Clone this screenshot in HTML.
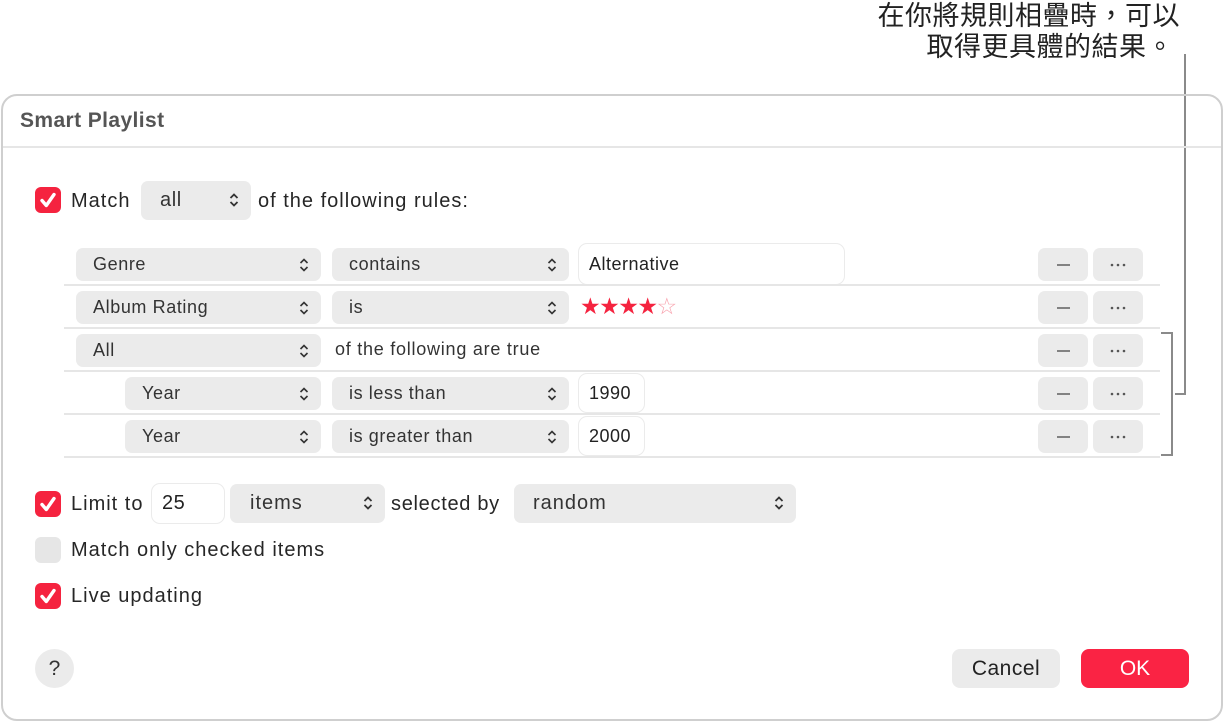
<!DOCTYPE html>
<html><head><meta charset="utf-8"><style>
*{box-sizing:border-box;margin:0;padding:0}
body{width:1226px;height:726px;background:#fff;position:relative;overflow:hidden;font-family:"Liberation Sans","Noto Sans CJK TC",sans-serif;color:#262626}
.a{position:absolute}
.dlg{left:1px;top:94px;width:1222px;height:627px;border:2px solid #cfcfcf;border-radius:16px}
.pop{position:absolute;background:#ebebeb;border-radius:7px;height:33px;font-size:18px;line-height:33px;padding-left:17px;color:#333;letter-spacing:0.6px}
.pop svg{position:absolute;right:12px;top:9px}
.fld{position:absolute;background:#fff;border:1.5px solid #ebebeb;border-radius:9px;font-size:18px;color:#222;padding-left:10px;letter-spacing:0.5px}
.sep{position:absolute;left:64px;width:1096px;height:2px;background:#e6e6e6}
.btn{position:absolute;background:#ebebeb;border-radius:7px;width:50px;height:33px}
.cb{position:absolute;width:26px;height:26px;border-radius:6px;background:#f5233f}
.cb svg{position:absolute;left:3px;top:3px}
.t{position:absolute;font-size:20px;line-height:24px;color:#262626;letter-spacing:1px}
</style></head><body>
<div class="a" style="left:800px;top:1px;width:380px;text-align:right;font-size:27px;line-height:31px;color:#222;letter-spacing:0.5px">在你將規則相疊時，可以<br><span style="margin-right:6px">取得更具體的結果。</span></div>
<div class="a" style="left:1184px;top:54px;width:2px;height:341px;background:#8a8a8a"></div>
<div class="a" style="left:1175px;top:393px;width:11px;height:2px;background:#8a8a8a"></div>
<div class="a" style="left:1171px;top:332px;width:2px;height:124px;background:#8a8a8a"></div>
<div class="a" style="left:1161px;top:332px;width:12px;height:2px;background:#8a8a8a"></div>
<div class="a" style="left:1161px;top:454px;width:12px;height:2px;background:#8a8a8a"></div>

<div class="a dlg"></div>
<div class="a" style="left:3px;top:146px;width:1218px;height:2px;background:#e6e6e6"></div>
<div class="a" style="left:20px;top:109px;font-size:21px;font-weight:bold;color:#555;letter-spacing:0.4px">Smart Playlist</div>

<div class="cb" style="left:35px;top:187px"><svg width="20" height="20" viewBox="0 0 20 20"><path d="M4 10.5 L8.3 15.5 L16 4.5" stroke="#fff" stroke-width="3.4" fill="none" stroke-linecap="round" stroke-linejoin="round"/></svg></div>
<div class="t" style="left:71px;top:189px">Match</div>
<div class="pop" style="left:141px;top:181px;width:110px;height:39px;line-height:39px;font-size:20px;padding-left:19px">all<svg width="10" height="16" viewBox="0 0 10 16" style="top:11px"><path d="M1.5 6 L5 2.5 L8.5 6 M1.5 10 L5 13.5 L8.5 10" stroke="#333" stroke-width="1.8" fill="none"/></svg></div>
<div class="t" style="left:258px;top:189px">of the following rules:</div>

<div class="pop" style="left:76px;top:248px;width:245px">Genre<svg width="10" height="16" viewBox="0 0 10 16"><path d="M1.5 6 L5 2.5 L8.5 6 M1.5 10 L5 13.5 L8.5 10" stroke="#333" stroke-width="1.6" fill="none"/></svg></div>
<div class="pop" style="left:332px;top:248px;width:237px">contains<svg width="10" height="16" viewBox="0 0 10 16"><path d="M1.5 6 L5 2.5 L8.5 6 M1.5 10 L5 13.5 L8.5 10" stroke="#333" stroke-width="1.6" fill="none"/></svg></div>
<div class="fld" style="left:578px;top:243px;width:267px;height:42px;line-height:40px">Alternative</div>
<div class="sep" style="top:284px"></div>

<div class="pop" style="left:76px;top:291px;width:245px">Album Rating<svg width="10" height="16" viewBox="0 0 10 16"><path d="M1.5 6 L5 2.5 L8.5 6 M1.5 10 L5 13.5 L8.5 10" stroke="#333" stroke-width="1.6" fill="none"/></svg></div>
<div class="pop" style="left:332px;top:291px;width:237px">is<svg width="10" height="16" viewBox="0 0 10 16"><path d="M1.5 6 L5 2.5 L8.5 6 M1.5 10 L5 13.5 L8.5 10" stroke="#333" stroke-width="1.6" fill="none"/></svg></div>
<div class="a" style="left:580px;top:294px;font-size:23px;line-height:26px;color:#f5233f;font-family:'DejaVu Sans',sans-serif;letter-spacing:-1.5px">★★★★<span style="color:#f8a0ac">☆</span></div>
<div class="sep" style="top:327px"></div>

<div class="pop" style="left:76px;top:334px;width:245px">All<svg width="10" height="16" viewBox="0 0 10 16"><path d="M1.5 6 L5 2.5 L8.5 6 M1.5 10 L5 13.5 L8.5 10" stroke="#333" stroke-width="1.6" fill="none"/></svg></div>
<div class="a" style="left:335px;top:338px;font-size:18px;line-height:22px;color:#333;letter-spacing:0.75px">of the following are true</div>
<div class="sep" style="top:370px"></div>

<div class="pop" style="left:125px;top:377px;width:196px">Year<svg width="10" height="16" viewBox="0 0 10 16"><path d="M1.5 6 L5 2.5 L8.5 6 M1.5 10 L5 13.5 L8.5 10" stroke="#333" stroke-width="1.6" fill="none"/></svg></div>
<div class="pop" style="left:332px;top:377px;width:237px">is less than<svg width="10" height="16" viewBox="0 0 10 16"><path d="M1.5 6 L5 2.5 L8.5 6 M1.5 10 L5 13.5 L8.5 10" stroke="#333" stroke-width="1.6" fill="none"/></svg></div>
<div class="fld" style="left:578px;top:373px;width:67px;height:40px;line-height:38px">1990</div>
<div class="sep" style="top:413px"></div>

<div class="pop" style="left:125px;top:420px;width:196px">Year<svg width="10" height="16" viewBox="0 0 10 16"><path d="M1.5 6 L5 2.5 L8.5 6 M1.5 10 L5 13.5 L8.5 10" stroke="#333" stroke-width="1.6" fill="none"/></svg></div>
<div class="pop" style="left:332px;top:420px;width:237px">is greater than<svg width="10" height="16" viewBox="0 0 10 16"><path d="M1.5 6 L5 2.5 L8.5 6 M1.5 10 L5 13.5 L8.5 10" stroke="#333" stroke-width="1.6" fill="none"/></svg></div>
<div class="fld" style="left:578px;top:416px;width:67px;height:40px;line-height:38px">2000</div>
<div class="sep" style="top:456px"></div>

<div class="btn" style="left:1038px;top:248px"></div><div class="btn" style="left:1093px;top:248px"></div>
<div class="btn" style="left:1038px;top:291px"></div><div class="btn" style="left:1093px;top:291px"></div>
<div class="btn" style="left:1038px;top:334px"></div><div class="btn" style="left:1093px;top:334px"></div>
<div class="btn" style="left:1038px;top:377px"></div><div class="btn" style="left:1093px;top:377px"></div>
<div class="btn" style="left:1038px;top:420px"></div><div class="btn" style="left:1093px;top:420px"></div>
<svg class="a" style="left:0;top:0" width="1226" height="726">
<g stroke="#555" stroke-width="1.4">
<line x1="1057" y1="265" x2="1070" y2="265"/><line x1="1057" y1="308" x2="1070" y2="308"/><line x1="1057" y1="351" x2="1070" y2="351"/><line x1="1057" y1="394" x2="1070" y2="394"/><line x1="1057" y1="437" x2="1070" y2="437"/>
</g>
<g fill="#555">
<circle cx="1112" cy="265" r="1.3"/><circle cx="1118" cy="265" r="1.3"/><circle cx="1124" cy="265" r="1.3"/>
<circle cx="1112" cy="308" r="1.3"/><circle cx="1118" cy="308" r="1.3"/><circle cx="1124" cy="308" r="1.3"/>
<circle cx="1112" cy="351" r="1.3"/><circle cx="1118" cy="351" r="1.3"/><circle cx="1124" cy="351" r="1.3"/>
<circle cx="1112" cy="394" r="1.3"/><circle cx="1118" cy="394" r="1.3"/><circle cx="1124" cy="394" r="1.3"/>
<circle cx="1112" cy="437" r="1.3"/><circle cx="1118" cy="437" r="1.3"/><circle cx="1124" cy="437" r="1.3"/>
</g></svg>

<div class="cb" style="left:35px;top:491px"><svg width="20" height="20" viewBox="0 0 20 20"><path d="M4 10.5 L8.3 15.5 L16 4.5" stroke="#fff" stroke-width="3.4" fill="none" stroke-linecap="round" stroke-linejoin="round"/></svg></div>
<div class="t" style="left:71px;top:492px">Limit to</div>
<div class="fld" style="left:151px;top:483px;width:74px;height:41px;line-height:39px;font-size:20px">25</div>
<div class="pop" style="left:230px;top:484px;width:155px;height:39px;line-height:39px;font-size:20px;padding-left:20px;letter-spacing:1px">items<svg width="10" height="16" viewBox="0 0 10 16" style="top:11px"><path d="M1.5 6 L5 2.5 L8.5 6 M1.5 10 L5 13.5 L8.5 10" stroke="#333" stroke-width="1.8" fill="none"/></svg></div>
<div class="t" style="left:391px;top:492px;letter-spacing:0.7px">selected by</div>
<div class="pop" style="left:514px;top:484px;width:282px;height:39px;line-height:39px;font-size:20px;padding-left:19px;letter-spacing:1px">random<svg width="10" height="16" viewBox="0 0 10 16" style="top:11px"><path d="M1.5 6 L5 2.5 L8.5 6 M1.5 10 L5 13.5 L8.5 10" stroke="#333" stroke-width="1.8" fill="none"/></svg></div>

<div class="cb" style="left:35px;top:537px;background:#e6e6e6"></div>
<div class="t" style="left:71px;top:538px">Match only checked items</div>
<div class="cb" style="left:35px;top:583px"><svg width="20" height="20" viewBox="0 0 20 20"><path d="M4 10.5 L8.3 15.5 L16 4.5" stroke="#fff" stroke-width="3.4" fill="none" stroke-linecap="round" stroke-linejoin="round"/></svg></div>
<div class="t" style="left:71px;top:584px">Live updating</div>

<div class="a" style="left:35px;top:649px;width:39px;height:39px;border-radius:50%;background:#ebebeb;text-align:center;line-height:39px;font-size:21px;color:#333">?</div>
<div class="a" style="left:952px;top:649px;width:108px;height:39px;border-radius:8px;background:#ebebeb;text-align:center;line-height:39px;font-size:21px;color:#222;letter-spacing:0.5px">Cancel</div>
<div class="a" style="left:1081px;top:649px;width:108px;height:39px;border-radius:8px;background:#fa2344;text-align:center;line-height:39px;font-size:21px;color:#fff">OK</div>
</body></html>
